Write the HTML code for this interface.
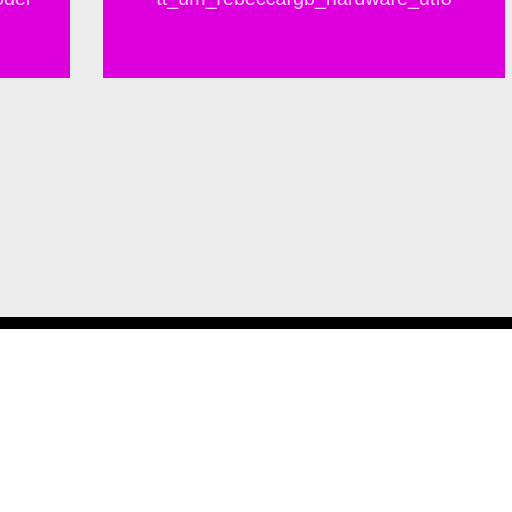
<!DOCTYPE html>
<html><head><style>
body{margin:0;width:512px;height:512px;background:#fff;position:relative;overflow:hidden;font-family:"Liberation Sans",sans-serif}
.g{position:absolute;left:0;top:0;width:512px;height:317px;background:#ececec}
.k{position:absolute;left:0;top:317px;width:512px;height:12px;background:#000}
.b{position:absolute;top:0;height:78px;background:#dd00dd;overflow:hidden}
.t{position:absolute;top:-12px;color:#f6c8f6;font-size:19.7px;white-space:nowrap;line-height:22px}
</style></head><body>
<div class="g"></div>
<div class="b" style="left:0;width:70px"><div class="t" style="left:-7px">odel</div></div>
<div class="b" style="left:103px;width:402px"><div class="t" style="left:0;width:402px;text-align:center">tt_um_rebeccargb_hardware_utf8</div></div>
<div class="k"></div>
</body></html>
